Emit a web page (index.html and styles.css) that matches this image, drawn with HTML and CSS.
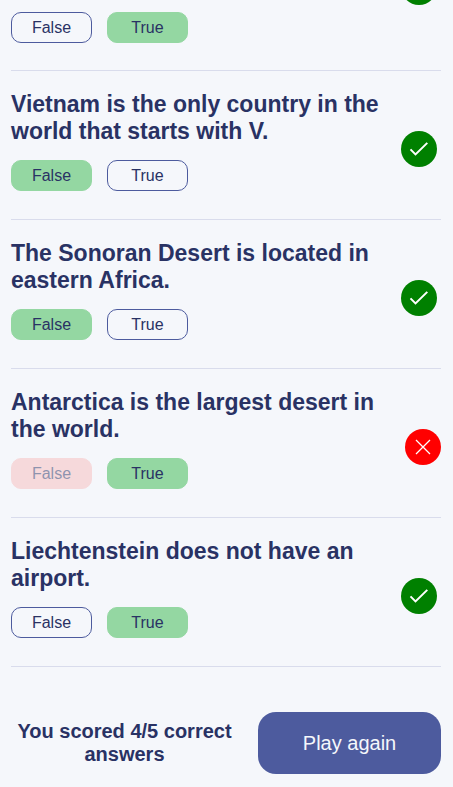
FILE: index.html
```html
<!DOCTYPE html>
<html lang="en">
<head>
<meta charset="utf-8">
<meta name="viewport" content="width=device-width, initial-scale=1">
<title>Quiz results</title>
<link rel="stylesheet" href="styles.css">
</head>
<body>
<svg class="sprite" aria-hidden="true">
  <symbol id="check" viewBox="0 0 36 36"><circle cx="18" cy="18" r="18" fill="#008000"/><path d="M9.5 18.4L14.5 23.4L26.3 11.9" fill="none" stroke="#fff" stroke-width="2"/></symbol>
  <symbol id="cross" viewBox="0 0 36 36"><circle cx="18" cy="18" r="18" fill="#f00"/><path d="M11 11L25 25M25 11L11 25" fill="none" stroke="#fff" stroke-width="1.3"/></symbol>
</svg>
<main class="quiz">
  <section class="item item-first">
    <div class="body">
      <div class="answers"><button class="answer">False</button><button class="answer correct">True</button></div>
    </div>
    <svg class="mark"><use href="#check"/></svg>
  </section>
  <section class="item">
    <div class="body">
      <h2 class="question">Vietnam is the only country in the world that starts with V.</h2>
      <div class="answers"><button class="answer correct">False</button><button class="answer">True</button></div>
    </div>
    <svg class="mark"><use href="#check"/></svg>
  </section>
  <section class="item">
    <div class="body">
      <h2 class="question">The Sonoran Desert is located in eastern Africa.</h2>
      <div class="answers"><button class="answer correct">False</button><button class="answer">True</button></div>
    </div>
    <svg class="mark"><use href="#check"/></svg>
  </section>
  <section class="item">
    <div class="body">
      <h2 class="question">Antarctica is the largest desert in the world.</h2>
      <div class="answers"><button class="answer wrong">False</button><button class="answer correct">True</button></div>
    </div>
    <svg class="mark mark-wrong"><use href="#cross"/></svg>
  </section>
  <section class="item">
    <div class="body">
      <h2 class="question">Liechtenstein does not have an airport.</h2>
      <div class="answers"><button class="answer">False</button><button class="answer correct">True</button></div>
    </div>
    <svg class="mark"><use href="#check"/></svg>
  </section>
  <footer class="footer">
    <p class="score">You scored 4/5 correct answers</p>
    <button class="play">Play again</button>
  </footer>
</main>
</body>
</html>
```
FILE: styles.css
```css
* {
  box-sizing: border-box;
}

body {
  margin: 0;
  background: #f5f7fb;
  color: #293264;
  font-family: "Liberation Sans", Arial, sans-serif;
}

.sprite {
  position: absolute;
  width: 0;
  height: 0;
}

.quiz {
  padding: 0 12px 12px 11px;
}

.item {
  display: flex;
  align-items: center;
  gap: 8px;
  padding: 20px 0 28px;
  border-bottom: 1px solid #d9dcec;
}

.item-first {
  align-items: flex-start;
  padding: 12px 0 27px;
}

.body {
  flex: 1;
}

.question {
  margin: 0 0 15px;
  font-size: 23px;
  line-height: 27px;
  font-weight: 700;
}

.answers {
  display: flex;
  gap: 15px;
}

.answer {
  width: 81px;
  height: 31px;
  padding: 0;
  border: 1px solid #4d5b9e;
  border-radius: 10px;
  background: transparent;
  color: #293264;
  font: 16px/18px "Liberation Sans", Arial, sans-serif;
}

.correct {
  border-color: #94d7a2;
  background: #94d7a2;
}

.wrong {
  border-color: #f8bcbc;
  background: #f8bcbc;
  opacity: 0.5;
}

.mark {
  flex: none;
  width: 36px;
  height: 36px;
  margin-top: 16px;
  margin-right: 4px;
}

.mark-wrong {
  margin-right: 0;
}

.item-first .mark {
  margin-top: -43px;
}

.footer {
  display: flex;
  align-items: center;
  gap: 20px;
  padding-top: 45px;
}

.score {
  flex: 1;
  margin: 0;
  font-size: 20px;
  line-height: 23px;
  font-weight: 700;
  text-align: center;
}

.play {
  width: 183px;
  height: 62px;
  border: 0;
  border-radius: 18px;
  background: #4d5b9e;
  color: #f5f7fb;
  font: 20px/23px "Liberation Sans", Arial, sans-serif;
}
```
